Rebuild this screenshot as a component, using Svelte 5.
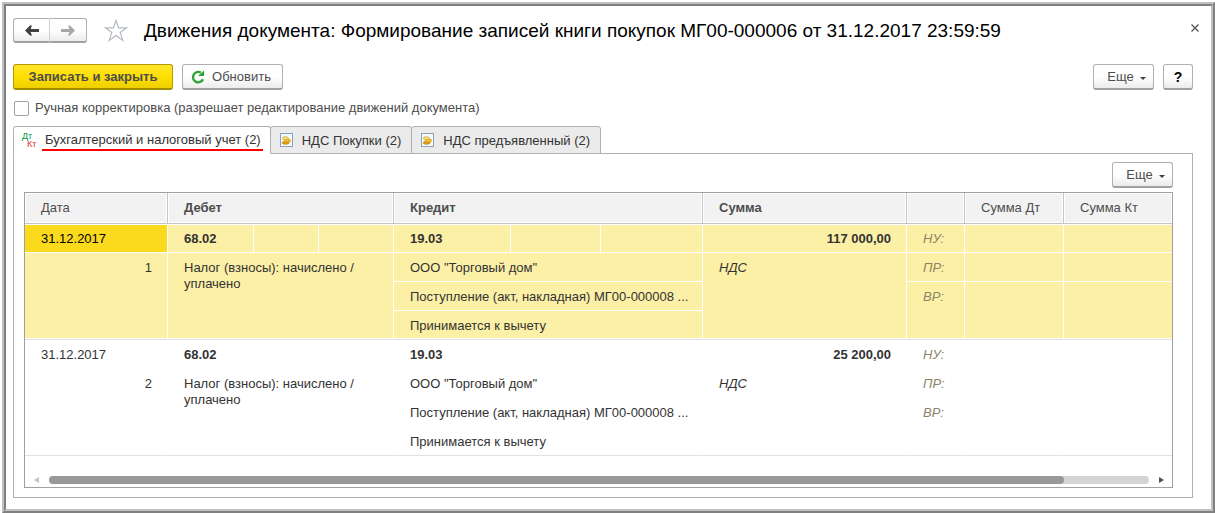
<script lang="ts">
  interface Entry {
    id: number;
    date: string;
    debit: string;
    debitNote: string;
    credit: string;
    creditNotes: string[];
    sum: string;
    sumNote: string;
  }

  const entries: Entry[] = [
    {
      id: 1,
      date: '31.12.2017',
      debit: '68.02',
      debitNote: 'Налог (взносы): начислено / уплачено',
      credit: '19.03',
      creditNotes: ['ООО "Торговый дом"', 'Поступление (акт, накладная) МГ00-000008 ...', 'Принимается к вычету'],
      sum: '117 000,00',
      sumNote: 'НДС',
    },
    {
      id: 2,
      date: '31.12.2017',
      debit: '68.02',
      debitNote: 'Налог (взносы): начислено / уплачено',
      credit: '19.03',
      creditNotes: ['ООО "Торговый дом"', 'Поступление (акт, накладная) МГ00-000008 ...', 'Принимается к вычету'],
      sum: '25 200,00',
      sumNote: 'НДС',
    },
  ];

  const tabs = [
    { id: 'accounting', label: 'Бухгалтерский и налоговый учет (2)' },
    { id: 'purchases', label: 'НДС Покупки (2)' },
    { id: 'presented', label: 'НДС предъявленный (2)' },
  ];

  let activeTab = $state('accounting');
  let selected = $state(1);
  let manual = $state(false);
</script>

<div class="window">
  <main class="form">
    <header class="title-bar">
      <div class="nav">
        <button class="btn nav-btn" aria-label="Назад">
          <svg width="14" height="11" viewBox="0 0 14 11">
            <path d="M5 5.5H14" stroke="#404040" stroke-width="3" />
            <path d="M0 5.5L5 0.5H7L5 5.5L7 10.5H5Z" fill="#404040" />
          </svg>
        </button>
        <button class="btn nav-btn" aria-label="Вперед">
          <svg width="14" height="11" viewBox="0 0 14 11">
            <path d="M0 5.5H9" stroke="#a8a8a8" stroke-width="3" />
            <path d="M14 5.5L9 0.5H7L9 5.5L7 10.5H9Z" fill="#a8a8a8" />
          </svg>
        </button>
      </div>
      <button class="icon-btn star" aria-label="В избранное">
        <svg width="24" height="23" viewBox="0 0 24 23" fill="none" stroke="#b4bac2" stroke-width="1.2">
          <path d="M12 1.5L14.6 8.8H22.6L16.2 13.4L18.8 21.4L12 16.4L5.2 21.4L7.8 13.4L1.4 8.8H9.4Z" />
        </svg>
      </button>
      <h1>Движения документа: Формирование записей книги покупок МГ00-000006 от 31.12.2017 23:59:59</h1>
      <button class="icon-btn close" aria-label="Закрыть">
        <svg width="8" height="8" viewBox="0 0 8 8" stroke="#505050" stroke-width="1.2">
          <path d="M0.5 0.5L7.5 7.5M7.5 0.5L0.5 7.5" />
        </svg>
      </button>
    </header>

    <div class="commands">
      <button class="btn primary">Записать и закрыть</button>
      <button class="btn refresh">
        <svg width="14" height="14" viewBox="0 0 14 14">
          <path d="M12 9.2A5.2 5.2 0 1 1 9.8 2.6" fill="none" stroke="#2fa336" stroke-width="2.4" />
          <path d="M7 6H13V0.5Z" fill="#2fa336" />
        </svg>
        Обновить
      </button>
      <span class="spacer"></span>
      <button class="btn more">Еще <i class="caret"></i></button>
      <button class="btn help">?</button>
    </div>

    <label class="manual">
      <input type="checkbox" bind:checked={manual} />
      Ручная корректировка (разрешает редактирование движений документа)
    </label>

    <div class="tabs" role="tablist">
      {#each tabs as tab}
        <button
          class="tab"
          class:active={activeTab === tab.id}
          role="tab"
          aria-selected={activeTab === tab.id}
          onclick={() => activeTab = tab.id}
        >
          {#if tab.id === 'accounting'}
            <span class="dtkt">
              <span class="dt">Дт</span>
              <span class="kt">Кт</span>
            </span>
          {:else}
            <svg class="coins" width="13" height="14" viewBox="0 0 13 14">
              <rect x="0.5" y="0.5" width="12" height="13" fill="#f4f9fd" stroke="#8ba3ba" />
              <ellipse cx="5.6" cy="9.8" rx="3.4" ry="1.5" fill="#dd9f16" stroke="#b87a0a" stroke-width="0.6" />
              <ellipse cx="7.6" cy="7.6" rx="3.2" ry="1.5" fill="#f2c32e" stroke="#c98d12" stroke-width="0.6" />
              <ellipse cx="5.4" cy="5.2" rx="3" ry="1.5" fill="#fbe07a" stroke="#c98d12" stroke-width="0.6" />
            </svg>
          {/if}
          <span class="tab-label">{tab.label}</span>
        </button>
      {/each}
    </div>

    <section class="panel">
      <div class="panel-bar">
        <button class="btn more">Еще <i class="caret"></i></button>
      </div>

      <div class="grid">
        <table>
          <colgroup>
            <col class="c-date" />
            <col class="c-d1" />
            <col class="c-d2" />
            <col class="c-d3" />
            <col class="c-k1" />
            <col class="c-k2" />
            <col class="c-k3" />
            <col class="c-sum" />
            <col class="c-kind" />
            <col class="c-sdt" />
            <col class="c-skt" />
          </colgroup>
          <thead>
            <tr>
              <th>Дата</th>
              <th class="strong" colspan="3">Дебет</th>
              <th class="strong" colspan="3">Кредит</th>
              <th class="strong">Сумма</th>
              <th></th>
              <th>Сумма Дт</th>
              <th>Сумма Кт</th>
            </tr>
          </thead>
          {#each entries as entry}
            <tbody class:selected={selected === entry.id} onclick={() => selected = entry.id}>
              <tr class="first">
                <td class="date">{entry.date}</td>
                <td class="strong">{entry.debit}</td>
                <td></td>
                <td></td>
                <td class="strong">{entry.credit}</td>
                <td></td>
                <td></td>
                <td class="strong num">{entry.sum}</td>
                <td class="kind">НУ:</td>
                <td></td>
                <td></td>
              </tr>
              <tr>
                <td class="num last" rowspan="3">{entry.id}</td>
                <td class="note last" colspan="3" rowspan="3">{entry.debitNote}</td>
                <td colspan="3">{entry.creditNotes[0]}</td>
                <td class="italic last" rowspan="3">{entry.sumNote}</td>
                <td class="kind">ПР:</td>
                <td></td>
                <td></td>
              </tr>
              <tr>
                <td colspan="3">{entry.creditNotes[1]}</td>
                <td class="kind last" rowspan="2">ВР:</td>
                <td class="last" rowspan="2"></td>
                <td class="last" rowspan="2"></td>
              </tr>
              <tr>
                <td class="last" colspan="3">{entry.creditNotes[2]}</td>
              </tr>
            </tbody>
          {/each}
        </table>

        <div class="scrollbar">
          <svg width="5" height="6" viewBox="0 0 5 6"><path d="M5 0V6L0 3Z" fill="#c0c0c0" /></svg>
          <div class="track"><div class="thumb"></div></div>
          <svg width="5" height="6" viewBox="0 0 5 6"><path d="M0 0V6L5 3Z" fill="#505050" /></svg>
        </div>
      </div>
    </section>
  </main>
</div>

<style>
  :global(body) {
    background: #fff;
  }

  .window {
    margin: 2px 0 0 2px;
    border: 2px solid;
    border-color: #c0c0c0 #808080 #808080 #c0c0c0;
    font-family: "Liberation Sans", Arial, sans-serif;
    font-size: 13px;
    line-height: 16px;
    color: #4d4d4d;
  }

  .form {
    border: 2px solid;
    border-color: #808080 #c0c0c0 #c0c0c0 #808080;
    padding: 12px 18px 11px 7px;
  }

  button {
    font: inherit;
    color: inherit;
    cursor: pointer;
  }

  .btn {
    display: flex;
    align-items: center;
    justify-content: center;
    box-sizing: border-box;
    height: 26px;
    padding: 1px 0 0;
    border: 1px solid #b0b0b0;
    border-bottom: 2px solid #a0a0a0;
    border-radius: 3px;
    background: linear-gradient(#fff 50%, #ececec);
  }

  .icon-btn {
    display: flex;
    padding: 0;
    border: none;
    background: none;
  }

  .title-bar {
    display: flex;
    align-items: center;
    height: 25px;
  }

  .nav {
    display: flex;
  }

  .nav-btn {
    width: 37px;
    height: 25px;
  }

  .nav-btn:first-child {
    border-right-color: #d0d0d0;
    border-radius: 3px 0 0 3px;
  }

  .nav-btn:last-child {
    border-left: none;
    border-radius: 0 3px 3px 0;
  }

  .star {
    margin-left: 17px;
  }

  h1 {
    flex: 1;
    margin: 0 0 0 16px;
    font-size: 19px;
    font-weight: 400;
    line-height: 24px;
    white-space: nowrap;
    color: #000;
  }

  .close {
    align-self: flex-start;
    margin: 6px -6px 0 0;
  }

  .commands {
    display: flex;
    gap: 9px;
    margin-top: 21px;
  }

  .spacer {
    flex: 1;
  }

  .primary {
    width: 160px;
    border-color: #b39b00;
    border-bottom-color: #a38d00;
    background: linear-gradient(#ffe62e, #ffdf00 50%, #efcf00);
    font-weight: 700;
  }

  .refresh {
    gap: 7px;
    width: 101px;
    padding-right: 3px;
  }

  .more {
    gap: 6px;
    width: 61px;
    padding-left: 6px;
  }

  .caret {
    margin-top: 2px;
    border: 3px solid transparent;
    border-top-color: #404040;
    border-bottom: none;
  }

  .help {
    width: 30px;
    font-size: 14px;
    font-weight: 700;
    color: #000;
  }

  .manual {
    display: flex;
    align-items: center;
    gap: 6px;
    width: fit-content;
    margin-top: 10px;
    padding-left: 1px;
  }

  .manual input {
    appearance: none;
    width: 15px;
    height: 15px;
    margin: 0;
    border: 1px solid #a0a0a0;
    border-radius: 2px;
    background: #fff;
  }

  .manual input:checked {
    background: #ffdf00;
  }

  .tabs {
    display: flex;
    margin-top: 10px;
  }

  .tab {
    display: flex;
    align-items: center;
    box-sizing: border-box;
    height: 28px;
    margin-bottom: -1px;
    padding: 0 8px 0 9px;
    border: 1px solid #b0b0b0;
    border-radius: 3px 3px 0 0;
    background: #ebebeb;
    color: #333;
  }

  .tab + .tab {
    margin-left: -1px;
  }

  .tab.active {
    padding: 0 7px 0 8px;
    border-bottom-color: #fff;
    background: #fff;
  }

  .tab.active .tab-label {
    border-bottom: 2px solid #f00;
  }

  .tab-label {
    padding: 2px 2px 1px 3px;
    white-space: nowrap;
  }

  .coins {
    margin-right: 6px;
  }

  .dtkt {
    display: flex;
    flex-direction: column;
    width: 17px;
    margin-right: 3px;
    font-size: 9px;
    line-height: 8px;
    text-align: left;
  }

  .dt {
    color: #009646;
  }

  .kt {
    padding-left: 5px;
    color: #e03030;
  }

  .panel {
    padding: 8px 19px 9px 10px;
    border: 1px solid #b0b0b0;
  }

  .panel-bar {
    display: flex;
    justify-content: flex-end;
    margin-bottom: 4px;
  }

  .grid {
    border: 1px solid #a0a0a0;
  }

  table {
    width: 100%;
    table-layout: fixed;
    border-collapse: separate;
    border-spacing: 0;
  }

  .c-date { width: 143px; }
  .c-d1 { width: 86px; }
  .c-d2 { width: 65px; }
  .c-d3 { width: 75px; }
  .c-k1 { width: 117px; }
  .c-k2 { width: 90px; }
  .c-k3 { width: 102px; }
  .c-sum { width: 204px; }
  .c-kind { width: 58px; }
  .c-sdt { width: 99px; }
  .c-skt { width: 108px; }

  th,
  td {
    box-sizing: border-box;
    text-align: left;
    font-weight: 400;
    white-space: nowrap;
  }

  th {
    height: 31px;
    padding: 6px 15px 6px 16px;
    border-right: 1px solid #c4c4c4;
    border-bottom: 1px solid #c4c4c4;
    background: #f2f2f2;
    box-shadow: inset 0 0 0 1px #fff;
  }

  td {
    height: 29px;
    padding: 7px 15px 5px 16px;
    border-right: 1px solid #fff;
    border-bottom: 1px solid #fff;
    vertical-align: top;
    color: #333;
  }

  th:last-child,
  td:last-child:not([colspan]) {
    border-right: none;
  }

  .first td {
    padding-top: 6px;
    border-top: 1px solid #fff;
  }

  .last {
    border-bottom-color: #e0e0e0;
    box-shadow: inset 0 -1px #fff;
  }

  .strong {
    font-weight: 700;
  }

  .num {
    text-align: right;
  }

  .note {
    white-space: normal;
  }

  .italic {
    font-style: italic;
  }

  .kind {
    font-style: italic;
    color: #8c8468;
  }

  .selected td {
    background: #fcf0a6;
  }

  .selected .date {
    background: #fbda1e;
    color: #000;
  }

  .scrollbar {
    display: flex;
    align-items: center;
    gap: 10px;
    padding: 20px 8px 3px 9px;
  }

  .track {
    flex: 1;
    height: 8px;
    border-radius: 4px;
    background: #d4d4d4;
  }

  .thumb {
    width: 92.3%;
    height: 8px;
    border-radius: 4px;
    background: #999;
  }
</style>
